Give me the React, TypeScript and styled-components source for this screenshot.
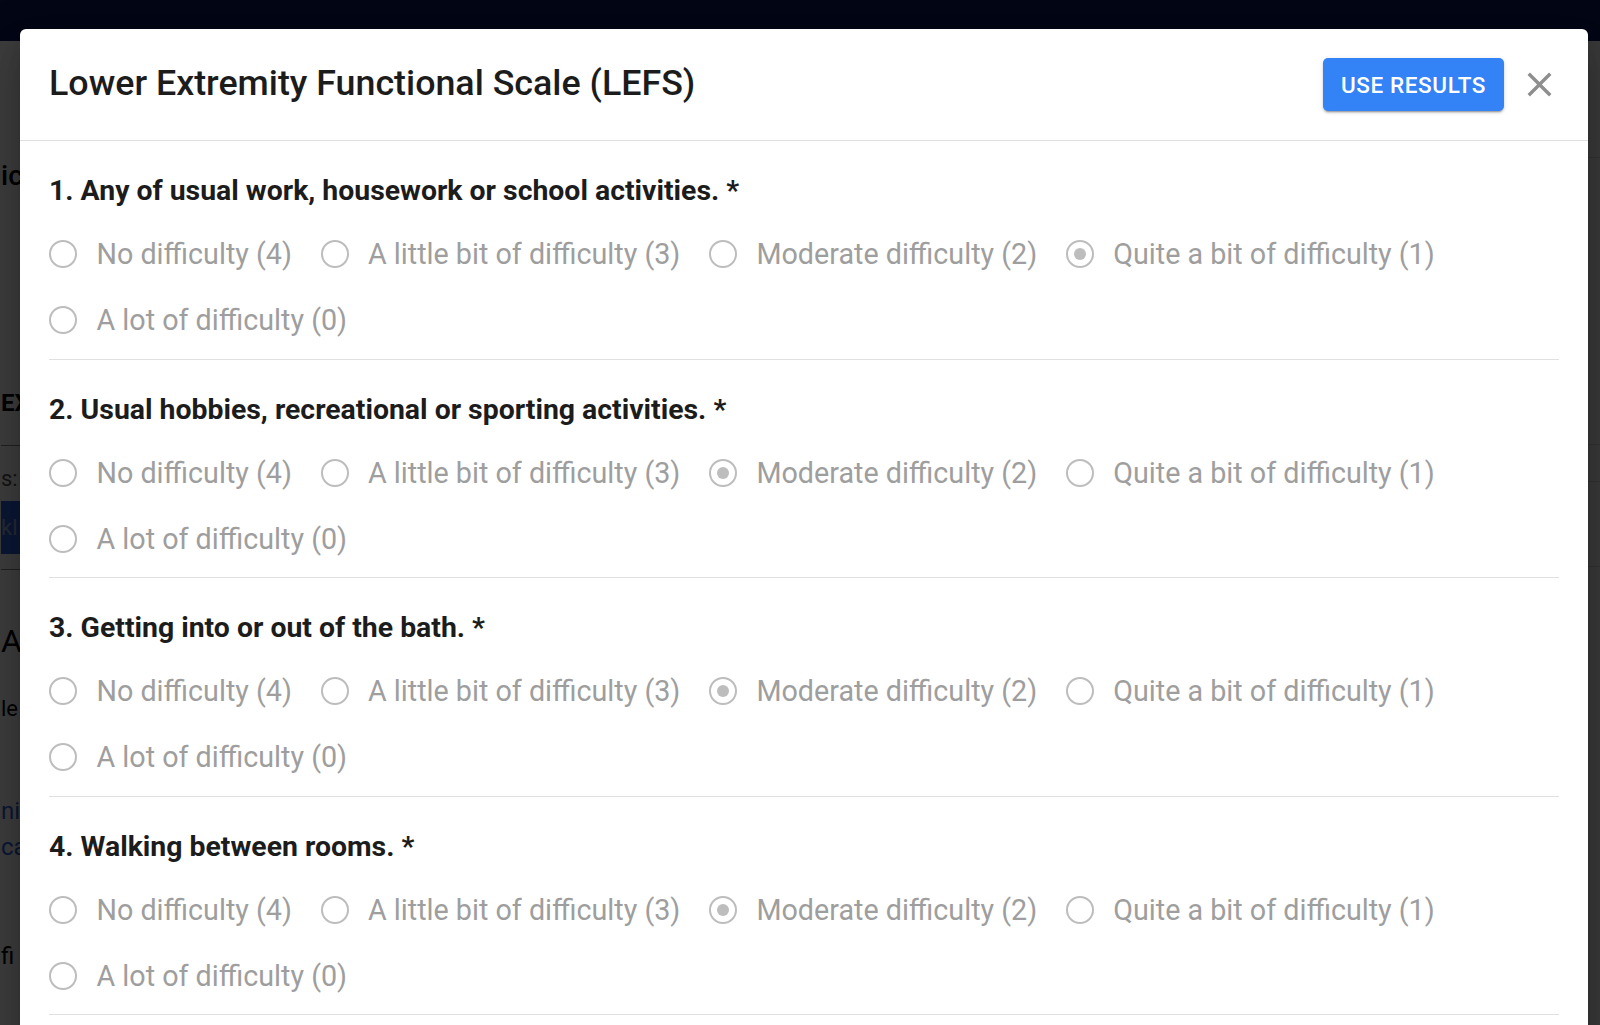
import React from "react";
import styled, { createGlobalStyle } from "styled-components";

const GlobalStyle = createGlobalStyle`
  html, body {
    margin: 0;
    padding: 0;
    height: 100%;
    overflow: hidden;
  }
  body {
    font-family: Roboto, "Liberation Sans", Arial, sans-serif;
    background: #ffffff;
  }
  #root {
    height: 100%;
  }
`;

const Viewport = styled.div`
  position: relative;
  width: 100%;
  height: 100vh;
  overflow: hidden;
`;

/* ---------- page behind the modal ---------- */

const BgPage = styled.div`
  display: flex;
  flex-direction: column;
  height: 100%;
  background: #ffffff;
`;

const TopBar = styled.div`
  height: 41px;
  flex-shrink: 0;
  background: #0e1c55;
`;

const BgBody = styled.div`
  flex: 1;
  display: flex;
  justify-content: space-between;
`;

const BgMain = styled.div`
  display: flex;
  flex-direction: column;
  width: 20px;
  overflow: hidden;
  padding-left: 1px;
  color: #000;
`;

const BgText = styled.div<{ $mt: number; $size?: number; $weight?: number; $color?: string }>`
  margin-top: ${(p) => p.$mt}px;
  font-size: ${(p) => p.$size ?? 22}px;
  font-weight: ${(p) => p.$weight ?? 400};
  color: ${(p) => p.$color ?? "#000"};
  line-height: 1.2;
  white-space: nowrap;
`;

const BgRule = styled.div<{ $mt: number }>`
  margin-top: ${(p) => p.$mt}px;
  height: 1px;
  background: #8a8a8a;
`;

const BgChip = styled.div`
  margin-top: 8px;
  height: 53px;
  display: flex;
  align-items: center;
  background: #2f63d8;
  color: #9fb0d8;
  font-size: 22px;
  white-space: nowrap;
`;

const BgSide = styled.div`
  width: 14px;
  display: flex;
  flex-direction: column;
  background: #f3f3f3;
`;

const BgSideBlock = styled.div<{ $h: number }>`
  height: ${(p) => p.$h}px;
  border-bottom: 1px solid #d0d0d0;
`;

const Backdrop = styled.div`
  position: absolute;
  inset: 0;
  background: rgba(0, 0, 0, 0.76);
`;

/* ---------- modal ---------- */

const Dialog = styled.div`
  position: absolute;
  top: 29px;
  left: 20px;
  right: 12px;
  min-height: 1100px;
  background: #ffffff;
  border-radius: 6px;
  box-shadow: 0 11px 15px -7px rgba(0, 0, 0, 0.2), 0 24px 38px 3px rgba(0, 0, 0, 0.14),
    0 9px 46px 8px rgba(0, 0, 0, 0.12);
`;

const Header = styled.header`
  height: 112px;
  box-sizing: border-box;
  padding: 0 25px 0 29px;
  display: flex;
  align-items: center;
  justify-content: space-between;
  border-bottom: 1px solid #e0e0e0;
`;

const Title = styled.h2`
  margin: 0 0 3px;
  font-size: 35.8px;
  font-weight: 500;
  color: #1c1c1c;
  letter-spacing: 0;
`;

const Actions = styled.div`
  display: flex;
  align-items: center;
  gap: 11px;
`;

const PrimaryButton = styled.button`
  height: 53px;
  padding: 0 17px;
  min-width: 181px;
  border: none;
  border-radius: 5px;
  background: #3382f6;
  color: #ffffff;
  font-family: inherit;
  font-size: 22.5px;
  font-weight: 500;
  letter-spacing: 0.6px;
  text-transform: uppercase;
  box-shadow: 0 3px 1px -2px rgba(0, 0, 0, 0.2), 0 2px 2px 0 rgba(0, 0, 0, 0.14),
    0 1px 5px 0 rgba(0, 0, 0, 0.12);
  cursor: pointer;
`;

const CloseButton = styled.button`
  width: 48px;
  height: 48px;
  padding: 0;
  border: none;
  background: transparent;
  display: grid;
  place-items: center;
  cursor: pointer;
`;

const Body = styled.div`
  padding: 0 29px;
`;

const Section = styled.section`
  padding: 32px 0 5.5px;
  border-bottom: 1px solid #e0e0e0;
`;

const Question = styled.h3`
  margin: 0 0 12px;
  font-size: 28.4px;
  line-height: 36px;
  font-weight: 700;
  color: #1c1c1c;
`;

const Options = styled.div`
  display: flex;
  flex-wrap: wrap;
`;

const Option = styled.label`
  display: flex;
  align-items: center;
  gap: 19.5px;
  height: 66px;
  margin-right: 28.6px;
  font-size: 28.7px;
  color: #9e9e9e;
  white-space: nowrap;
`;

const RadioCircle = styled.span<{ $checked: boolean }>`
  width: 28px;
  height: 28px;
  box-sizing: border-box;
  border: 2.4px solid #bdbdbd;
  border-radius: 50%;
  display: grid;
  place-items: center;
  flex-shrink: 0;

  &::after {
    content: "";
    width: 12px;
    height: 12px;
    border-radius: 50%;
    background: #bdbdbd;
    display: ${(p) => (p.$checked ? "block" : "none")};
  }
`;

const CHOICES = [
  "No difficulty (4)",
  "A little bit of difficulty (3)",
  "Moderate difficulty (2)",
  "Quite a bit of difficulty (1)",
  "A lot of difficulty (0)",
];

const QUESTIONS = [
  { text: "Any of usual work, housework or school activities.", value: 3 },
  { text: "Usual hobbies, recreational or sporting activities.", value: 2 },
  { text: "Getting into or out of the bath.", value: 2 },
  { text: "Walking between rooms.", value: 2 },
];

const CloseIcon = () => (
  <svg width="41" height="41" viewBox="0 0 24 24" aria-hidden="true">
    <path
      fill="#8e8e8e"
      d="M19 6.41 17.59 5 12 10.59 6.41 5 5 6.41 10.59 12 5 17.59 6.41 19 12 13.41 17.59 19 19 17.59 13.41 12z"
    />
  </svg>
);

export default function App() {
  return (
    <Viewport>
      <GlobalStyle />
      <BgPage>
        <TopBar />
        <BgBody>
          <BgMain>
            <BgText $mt={118} $size={28} $weight={500}>
              ic
            </BgText>
            <BgText $mt={196} $size={24} $weight={700}>
              EX
            </BgText>
            <BgRule $mt={28} />
            <BgText $mt={20} $size={22} $color="#555">
              s:
            </BgText>
            <BgChip>kl</BgChip>
            <BgRule $mt={15} />
            <BgText $mt={52} $size={32}>
              Ar
            </BgText>
            <BgText $mt={36} $size={22}>
              le
            </BgText>
            <BgText $mt={74} $size={24} $color="#2f63d8">
              ni
            </BgText>
            <BgText $mt={8} $size={24} $color="#2f63d8">
              ca
            </BgText>
            <BgText $mt={80} $size={24}>
              fi
            </BgText>
          </BgMain>
          <BgSide>
            <BgSideBlock $h={116} />
            <BgSideBlock $h={286} />
            <BgSideBlock $h={36} />
            <BgSideBlock $h={84} />
          </BgSide>
        </BgBody>
      </BgPage>
      <Backdrop />

      <Dialog role="dialog" aria-label="Lower Extremity Functional Scale (LEFS)">
        <Header>
          <Title>Lower Extremity Functional Scale (LEFS)</Title>
          <Actions>
            <PrimaryButton>Use Results</PrimaryButton>
            <CloseButton aria-label="close">
              <CloseIcon />
            </CloseButton>
          </Actions>
        </Header>
        <Body>
          {QUESTIONS.map((q, qi) => (
            <Section key={qi}>
              <Question>
                {qi + 1}. {q.text} *
              </Question>
              <Options>
                {CHOICES.map((c, ci) => (
                  <Option key={ci}>
                    <RadioCircle $checked={ci === q.value} />
                    {c}
                  </Option>
                ))}
              </Options>
            </Section>
          ))}
        </Body>
      </Dialog>
    </Viewport>
  );
}
